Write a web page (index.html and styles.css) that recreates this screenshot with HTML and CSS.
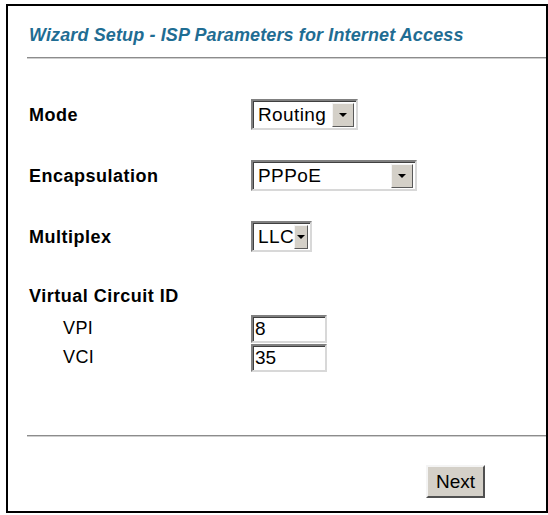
FILE: index.html
```html
<!DOCTYPE html>
<html>
<head>
<meta charset="utf-8">
<link rel="stylesheet" href="styles.css">
</head>
<body>
<div class="frame">
  <h1 class="title">Wizard Setup - ISP Parameters for Internet Access</h1>
  <div class="rule"></div>
  <div class="form">
    <div class="row">
      <div class="label">Mode</div>
      <div class="select sel-mode"><span class="value">Routing</span><span class="arrow"><span class="tri"></span></span></div>
    </div>
    <div class="row">
      <div class="label">Encapsulation</div>
      <div class="select sel-encap"><span class="value">PPPoE</span><span class="arrow"><span class="tri"></span></span></div>
    </div>
    <div class="row">
      <div class="label">Multiplex</div>
      <div class="select sel-mux"><span class="value">LLC</span><span class="arrow"><span class="tri"></span></span></div>
    </div>
    <div class="vc">
      <div class="label">Virtual Circuit ID</div>
      <div class="subrow">
        <div class="sublabel">VPI</div>
        <div class="input">8</div>
      </div>
      <div class="subrow">
        <div class="sublabel">VCI</div>
        <div class="input">35</div>
      </div>
    </div>
  </div>
  <div class="rule rule-bottom"></div>
  <div class="actions">
    <div class="button">Next</div>
  </div>
</div>
</body>
</html>
```
FILE: styles.css
```css
html, body {
  margin: 0;
  padding: 0;
  background: #ffffff;
}
body {
  font-family: "Liberation Sans", Arial, sans-serif;
  color: #000;
}
.frame {
  box-sizing: border-box;
  margin: 4px 0 0 6px;
  width: 542px;
  height: 509px;
  border: 2px solid #000;
  padding: 0 0 0 19px;
  display: flex;
  flex-direction: column;
}
.title {
  margin: 18px 0 0 2px;
  font-size: 18px;
  line-height: 22px;
  font-weight: bold;
  font-style: italic;
  color: #1f6d93;
  letter-spacing: 0.12px;
}
.rule {
  height: 1px;
  background: #8c8c8c;
  border-bottom: 1px solid #cfcfcf;
  margin-top: 11px;
}
.form {
  padding-left: 2px;
  margin-top: 40px;
  display: flex;
  flex-direction: column;
  gap: 30px;
}
.row {
  display: grid;
  grid-template-columns: 222px auto;
  align-items: center;
  height: 31px;
}
.label {
  font-size: 18px;
  font-weight: bold;
  line-height: 20px;
  letter-spacing: 0.5px;
}
.select {
  box-sizing: border-box;
  height: 31px;
  display: flex;
  align-items: center;
  justify-content: space-between;
  border-style: solid;
  border-width: 2px;
  border-color: #808080 #d8d8d8 #d8d8d8 #808080;
  box-shadow: inset 1px 1px 0 #404040;
  background: #fff;
  padding: 0 2px 0 5px;
  font-size: 19px;
  letter-spacing: 0.4px;
}
.sel-mode { width: 107px; }
.sel-encap { width: 166px; }
.sel-mux { width: 61px; }
.value { line-height: 22px; }
.arrow {
  box-sizing: border-box;
  width: 22px;
  height: 24px;
  background: #d4d0c8;
  border-style: solid;
  border-width: 1px;
  border-color: #f4f4f4 #5a5a5a #5a5a5a #f4f4f4;
  display: flex;
  align-items: center;
  justify-content: center;
}
.tri {
  width: 0;
  height: 0;
  border-left: 4px solid transparent;
  border-right: 4px solid transparent;
  border-top: 4px solid #000;
}
.vc {
  display: flex;
  flex-direction: column;
  margin-top: 4px;
}
.subrow {
  display: grid;
  grid-template-columns: 222px auto;
  align-items: center;
  height: 29px;
}
.vc .label { margin-bottom: 8px; }
.sublabel {
  padding-left: 34px;
  font-size: 18px;
  letter-spacing: 0.4px;
}
.input {
  box-sizing: border-box;
  width: 76px;
  height: 28px;
  border-style: solid;
  border-width: 2px;
  border-color: #808080 #d8d8d8 #d8d8d8 #808080;
  box-shadow: inset 1px 1px 0 #404040;
  padding: 0 2px;
  font-size: 19px;
  line-height: 24px;
}
.rule-bottom {
  margin-top: auto;
  margin-bottom: 0;
}
.actions {
  display: flex;
  justify-content: flex-end;
  padding: 28px 61px 13px 0;
}
.button {
  box-sizing: border-box;
  width: 59px;
  height: 33px;
  background: #d4d0c8;
  border-style: solid;
  border-width: 2px;
  border-color: #f4f4f4 #505050 #505050 #f4f4f4;
  font-size: 19px;
  display: flex;
  align-items: center;
  justify-content: center;
}
```
